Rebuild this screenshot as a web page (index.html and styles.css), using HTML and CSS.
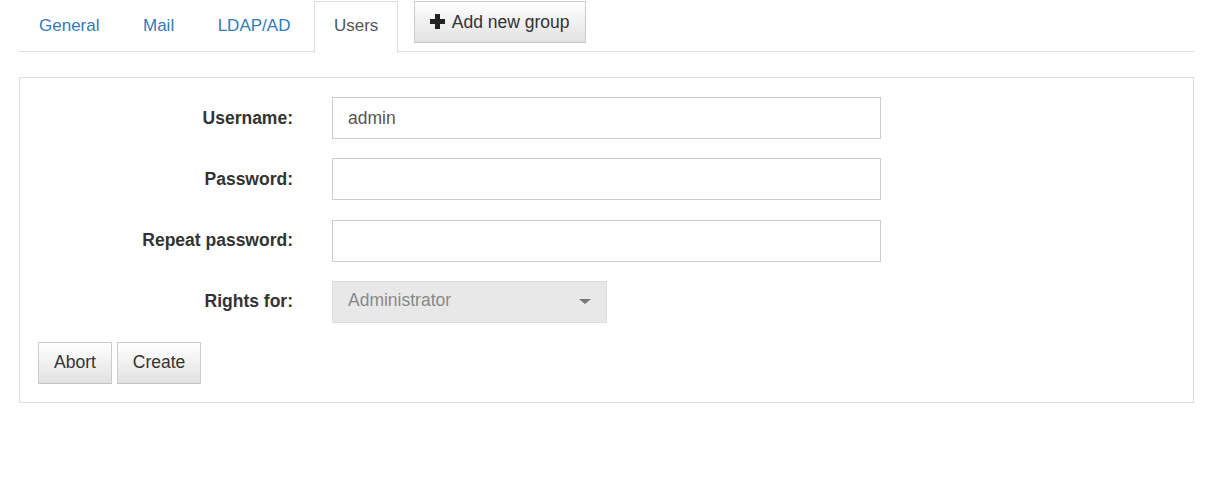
FILE: index.html
```html
<!DOCTYPE html>
<html lang="en">
<head>
    <meta charset="UTF-8">
    <title>Users</title>
    <link rel="stylesheet" href="styles.css">
</head>
<body>
    <div class="tabBar">
        <a class="tab" href="#">General</a>
        <a class="tab" href="#">Mail</a>
        <a class="tab" href="#">LDAP/AD</a>
        <a class="tab active" href="#">Users</a>
        <button class="btn addGroup"><span class="plus"></span>Add new group</button>
    </div>

    <div class="panel">
        <div class="formGrid">
            <label class="fieldLabel">Username:</label>
            <input class="field" type="text" value="admin">

            <label class="fieldLabel">Password:</label>
            <input class="field" type="password">

            <label class="fieldLabel">Repeat password:</label>
            <input class="field" type="password">

            <label class="fieldLabel">Rights for:</label>
            <div class="selectBox">
                <span>Administrator</span>
                <span class="caret"></span>
            </div>
        </div>
        <div class="actions">
            <button class="btn">Abort</button>
            <button class="btn">Create</button>
        </div>
    </div>
</body>
</html>
```

FILE: styles.css
```css
html, body {
    margin: 0;
    background: #fff;
}

body {
    padding: 1px 18px 0 19px;
    font-family: "Liberation Sans", Arial, sans-serif;
    font-size: 17.5px;
    color: #333;
}

.tabBar {
    display: flex;
    align-items: flex-start;
    border-bottom: 1px solid #ddd;
    height: 50px;
}

.tab {
    display: block;
    height: 50px;
    line-height: 48px;
    padding: 0 19px;
    margin-right: 3.5px;
    font-size: 17px;
    color: #337ab7;
    text-decoration: none;
    border: 1px solid transparent;
    border-bottom: none;
}

.tab.active {
    color: #555;
    background: #fff;
    border-color: #ddd;
    height: 51px;
}

.btn {
    font-family: "Liberation Sans", Arial, sans-serif;
    font-size: 17.5px;
    color: #333;
    height: 42px;
    padding: 0 15px;
    border: 1px solid #ccc;
    border-bottom-color: #c4c4c4;
    background: linear-gradient(to bottom, #fff 0%, #e2e2e2 100%);
    cursor: pointer;
}

.addGroup {
    margin-left: 12px;
    display: flex;
    align-items: center;
    padding: 0 15px 0 15px;
}

/* thick plus sign */
.plus {
    position: relative;
    width: 15px;
    height: 15px;
    margin-right: 7px;
    margin-top: -2px;
}
.plus::before, .plus::after {
    content: "";
    position: absolute;
    background: #222;
}
.plus::before {
    left: 0;
    top: 5px;
    width: 15px;
    height: 5px;
}
.plus::after {
    left: 5px;
    top: 0;
    width: 5px;
    height: 15px;
}

.panel {
    margin-top: 25px;
    border: 1px solid #ddd;
    padding: 19px 18px 18px 18px;
}

.formGrid {
    display: grid;
    grid-template-columns: 255px 549px;
    column-gap: 39px;
    row-gap: 19.3px;
    align-items: center;
}

.fieldLabel {
    text-align: right;
    font-weight: bold;
    color: #333;
}

.field {
    box-sizing: border-box;
    height: 42px;
    width: 549px;
    border: 1px solid #ccc;
    padding: 0 15px;
    font-family: "Liberation Sans", Arial, sans-serif;
    font-size: 17.5px;
    color: #555;
    outline: none;
}

.selectBox {
    box-sizing: border-box;
    width: 275px;
    height: 42px;
    border: 1px solid #ddd;
    background: #e8e8e8;
    color: #888;
    padding: 0 15px;
    display: flex;
    align-items: center;
    justify-content: space-between;
    padding-bottom: 2px;
}

.caret {
    width: 0;
    height: 0;
    border-left: 6px solid transparent;
    border-right: 6px solid transparent;
    border-top: 5px solid #777;
    margin-top: 2px;
}

.actions {
    margin-top: 19px;
    display: flex;
    gap: 5px;
}
```
